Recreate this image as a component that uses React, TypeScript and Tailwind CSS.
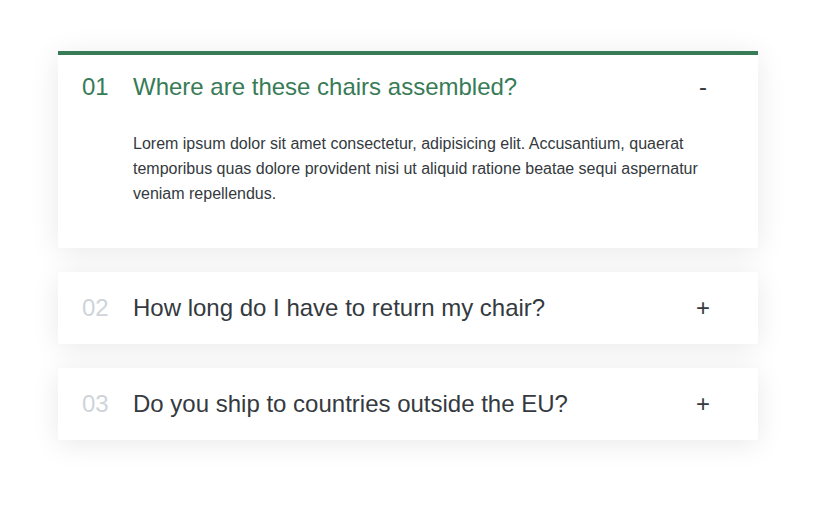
const faqs = [
  {
    num: "01",
    title: "Where are these chairs assembled?",
    text: "Lorem ipsum dolor sit amet consectetur, adipisicing elit. Accusantium, quaerat temporibus quas dolore provident nisi ut aliquid ratione beatae sequi aspernatur veniam repellendus.",
  },
  {
    num: "02",
    title: "How long do I have to return my chair?",
    text: "",
  },
  {
    num: "03",
    title: "Do you ship to countries outside the EU?",
    text: "",
  },
];

function Item({ num, title, text, open }: { num: string; title: string; text: string; open: boolean }) {
  return (
    <div
      className={
        open
          ? "bg-white border-t-4 border-[#387b57] pt-5 pb-[42px] pl-6 pr-12 shadow-[0_4px_28px_rgba(0,0,0,0.09)]"
          : "bg-white py-6 pl-6 pr-12 shadow-[0_4px_28px_rgba(0,0,0,0.09)]"
      }
    >
      <div className="flex items-center text-[24px] leading-6">
        <span className={open ? "w-[51px] text-[#387b57]" : "w-[51px] text-[#ced4da]"}>{num}</span>
        <span className={open ? "flex-1 text-[#387b57]" : "flex-1 text-[#343a40]"}>{title}</span>
        <span className="w-[14px] text-center text-[#343a40]">{open ? "-" : "+"}</span>
      </div>
      {open && (
        <p className="mt-8 ml-[51px] text-[16px] leading-[25px] text-[#343a40]">{text}</p>
      )}
    </div>
  );
}

export default function App() {
  return (
    <div className="min-h-screen bg-white px-[58px] pt-[51px] font-['Liberation_Sans',Arial,sans-serif]">
      <div className="flex w-[700px] flex-col gap-6">
        {faqs.map((f, i) => (
          <Item key={f.num} num={f.num} title={f.title} text={f.text} open={i === 0} />
        ))}
      </div>
    </div>
  );
}
